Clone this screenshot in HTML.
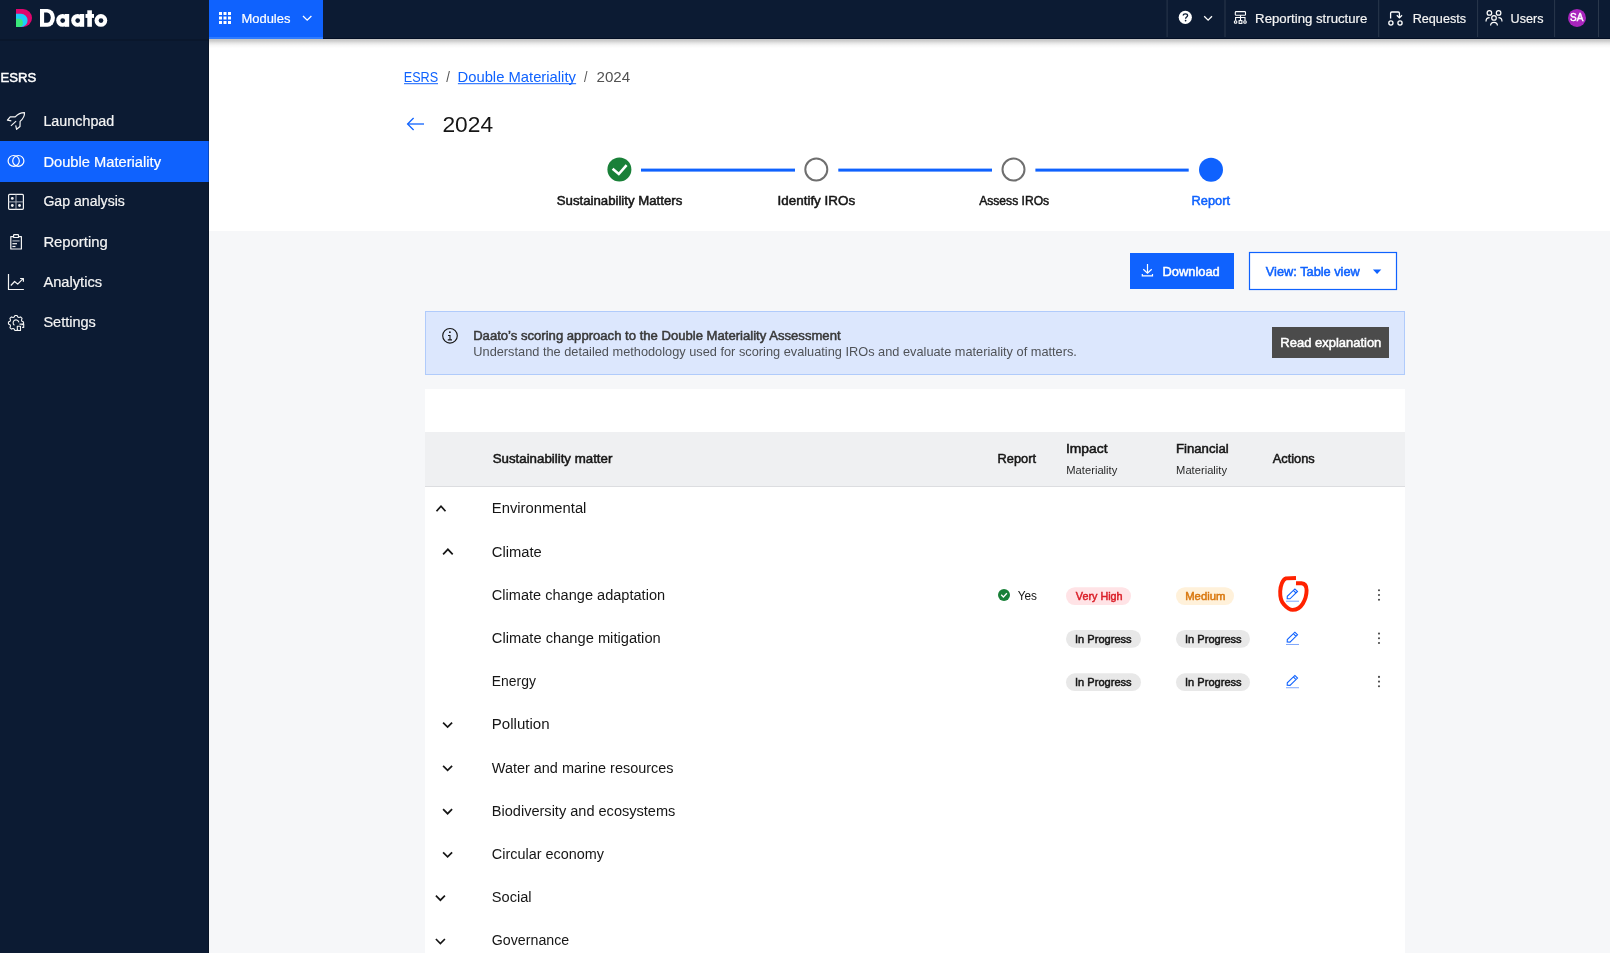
<!DOCTYPE html>
<html lang="en"><head><meta charset="utf-8"><title>Daato - Double Materiality 2024</title>
<style>
html,body{margin:0;padding:0;width:1610px;height:953px;overflow:hidden;background:#f6f7f9}
svg{position:absolute;left:0;top:0;display:block;will-change:transform}
text{font-family:"Liberation Sans",sans-serif;white-space:pre}
</style></head>
<body>
<svg width="1610" height="953" viewBox="0 0 1610 953">
<defs>
  <linearGradient id="hdrShadow" x1="0" y1="0" x2="0" y2="1">
    <stop offset="0" stop-color="#000" stop-opacity="0.22"/>
    <stop offset="0.2" stop-color="#000" stop-opacity="0.20"/>
    <stop offset="0.45" stop-color="#000" stop-opacity="0.10"/>
    <stop offset="0.7" stop-color="#000" stop-opacity="0.035"/>
    <stop offset="1" stop-color="#000" stop-opacity="0"/>
  </linearGradient>
</defs>
<!-- main backgrounds -->
<rect x="209" y="39" width="1401" height="914" fill="#f6f7f9"/>
<rect x="209" y="39" width="1401" height="192" fill="#ffffff"/>
<!-- sidebar -->
<rect x="0" y="39" width="209" height="914" fill="#0c1b33"/>
<rect x="0" y="141" width="209" height="41" fill="#0f62fe"/>
<!-- topbar -->
<rect x="0" y="0" width="1610" height="39" fill="#0c1b33"/>
<rect x="209" y="0" width="114" height="39" fill="#0f62fe"/>
<rect x="323" y="38" width="1287" height="1" fill="#020e24"/>
<rect x="209" y="37" width="114" height="2" fill="#2f7bff"/>
<rect x="209" y="39" width="1401" height="9" fill="url(#hdrShadow)"/>
<rect x="0" y="39" width="209" height="2" fill="#000" fill-opacity="0.12"/>
<rect x="208" y="39" width="1" height="914" fill="#000" fill-opacity="0.25"/>
<!-- top bar separators -->
<g fill="#2a384c">
  <rect x="1166.6" y="0" width="1" height="37"/>
  <rect x="1224.5" y="0" width="1" height="37"/>
  <rect x="1378.2" y="0" width="1" height="37"/>
  <rect x="1477.1" y="0" width="1" height="37"/>
  <rect x="1554.1" y="0" width="1" height="37"/>
  <rect x="1598" y="0" width="1" height="37"/>
</g>
<!-- logo mark -->
<path d="M16,9 H23 A9,9 0 0 1 23,27 H16 Z" fill="#e0066e"/>
<path d="M16,13.8 H21 A6.6,6.6 0 0 1 21,27 H16 Z" fill="#1ecbf9"/>
<path d="M16,18.8 H18.8 A4.1,4.1 0 0 1 18.8,27 H16 Z" fill="#3ae87a"/>
<!-- wordmark -->
<g fill="#ffffff">
  <path d="M40,8.9 H47.5 A7.4,8.95 0 0 1 47.5,26.8 H40 Z"/>
  <circle cx="62.6" cy="20.4" r="6.4"/><rect x="65" y="14" width="4.2" height="12.8"/>
  <circle cx="77.6" cy="20.4" r="6.4"/><rect x="80" y="14" width="4.2" height="12.8"/>
  <rect x="87.3" y="10.3" width="4.6" height="16.5"/><rect x="85.5" y="14" width="8.5" height="3.9"/>
  <circle cx="100.9" cy="20.4" r="6.35"/>
</g>
<g fill="#0c1b33">
  <path d="M44.1,12.4 H47 A3.8,5.15 0 0 1 47,22.7 H44.1 Z"/>
  <circle cx="62.7" cy="20.6" r="2.35"/>
  <circle cx="77.7" cy="20.6" r="2.35"/>
  <circle cx="101" cy="20.6" r="2.35"/>
</g>
<!-- modules grid icon -->
<g fill="#ffffff">
  <rect x="219" y="12" width="3" height="3"/><rect x="223.5" y="12" width="3" height="3"/><rect x="228" y="12" width="3" height="3"/>
  <rect x="219" y="16.5" width="3" height="3"/><rect x="223.5" y="16.5" width="3" height="3"/><rect x="228" y="16.5" width="3" height="3"/>
  <rect x="219" y="21" width="3" height="3"/><rect x="223.5" y="21" width="3" height="3"/><rect x="228" y="21" width="3" height="3"/>
</g>
<polyline points="303,16 307.2,20.2 311.4,16" fill="none" stroke="#ffffff" stroke-width="1.3"/>
<!-- help icon -->
<circle cx="1185.3" cy="17.3" r="6.6" fill="#ffffff"/>
<path d="M1183.2,15.6 C1183.2,13.2 1187.6,13.2 1187.6,15.6 C1187.6,17.1 1185.6,17.1 1185.6,18.8" fill="none" stroke="#0c1b33" stroke-width="1.3"/>
<circle cx="1185.6" cy="20.6" r="0.85" fill="#0c1b33"/>
<polyline points="1204.2,16.2 1208.1,20.1 1212,16.2" fill="none" stroke="#ffffff" stroke-width="1.3"/>
<!-- reporting structure icon -->
<g fill="none" stroke="#ffffff" stroke-width="1.1">
  <rect x="1235.3" y="11.6" width="10.2" height="3.6" rx="0.8"/>
  <path d="M1240.5,15.2 V17.5 M1235.6,20.4 V17.5 H1245 V20.4 M1240.5,17.5 V20.5"/>
  <circle cx="1235.6" cy="22" r="1.3"/>
  <circle cx="1245" cy="22" r="1.3"/>
  <rect x="1239.1" y="20.6" width="2.8" height="2.8"/>
</g>
<!-- requests icon -->
<g fill="none" stroke="#ffffff" stroke-width="1.3">
  <path d="M1390.6,18.4 V13.2 Q1390.6,12 1391.8,12 H1398.2 Q1399.4,12 1399.4,13.2 V17.6"/>
  <polyline points="1396.8,15.3 1399.4,17.9 1402,15.3"/>
  <circle cx="1390.9" cy="23" r="2.1"/>
  <circle cx="1400" cy="23" r="2.1"/>
</g>
<!-- users icon -->
<g fill="none" stroke="#ffffff" stroke-width="1.2">
  <circle cx="1489.4" cy="12.9" r="2.3"/>
  <circle cx="1498.6" cy="12.9" r="2.3"/>
  <circle cx="1494" cy="17.9" r="2.3"/>
  <path d="M1486,21.4 Q1486,17.6 1489.6,17.6"/>
  <path d="M1502,21.4 Q1502,17.6 1498.4,17.6"/>
  <path d="M1490.6,25.6 Q1490.6,22.3 1494,22.3 Q1497.4,22.3 1497.4,25.6"/>
</g>
<!-- avatar -->
<circle cx="1577" cy="17.9" r="9" fill="#a925bd"/>


<!-- sidebar icons -->
<g fill="none" stroke="#f4f4f4" stroke-width="1.2" stroke-linejoin="round">
  <!-- rocket -->
  <path d="M11.3,120.9 L7.4,120.2 L10.2,116.9 L15.2,116.9 C17.5,114.5 20.5,112.5 24.5,112.6 C24.8,116.5 22.5,119.2 20.1,121.4 L20,126.5 L16.6,129.3 L15.7,125.3"/>
  <path d="M10.9,125.9 L16.1,121.1"/>
  <!-- gap grid -->
  <rect x="8.6" y="194.4" width="14.8" height="14.9" rx="1"/>
  <path d="M16,194.4 V209.3 M8.6,201.9 H23.4" stroke="#aab0bb" stroke-width="1"/>
  <!-- clipboard -->
  <path d="M13.3,236.6 H10.8 V249 H21.4 V236.6 H18.9"/>
  <rect x="13.6" y="234.6" width="4.9" height="2.9" rx="0.6"/>
  <path d="M12.4,240.9 H19.6" stroke="#aab0bb"/>
  <path d="M12.4,243.7 H17"/>
  <path d="M12.4,246.5 H15.5"/>
  <!-- analytics -->
  <path d="M8.5,274 V289.5 H23.9"/>
  <polyline points="10.8,285.5 14.6,281.5 17.7,284.1 23.1,278.6"/>
  <polyline points="20.1,278.5 23.4,278.5 23.4,281.8"/>
</g>
<g fill="#f4f4f4">
  <circle cx="12.3" cy="198.4" r="1.4"/>
  <circle cx="12.3" cy="205.5" r="1.4"/>
  <circle cx="19.5" cy="205.5" r="1.4"/>
</g>
<!-- double materiality icon -->
<g fill="none" stroke="#ffffff" stroke-width="1.2">
  <ellipse cx="13.7" cy="160.9" rx="5.6" ry="5.4"/>
  <ellipse cx="18.3" cy="160.9" rx="5.6" ry="5.4"/>
</g>
<!-- settings gear -->
<g fill="none" stroke="#f4f4f4" stroke-width="1.1" stroke-linejoin="round">
  <path d="M17.92,328.90 L17.81,328.93 L17.06,330.53 L14.94,330.53 L14.19,328.93 L13.09,328.47 L11.43,329.07 L9.93,327.57 L10.53,325.91 L10.07,324.81 L8.47,324.06 L8.47,321.94 L10.07,321.19 L10.53,320.09 L9.93,318.43 L11.43,316.93 L13.09,317.53 L14.19,317.07 L14.94,315.47 L17.06,315.47 L17.81,317.07 L18.91,317.53 L20.57,316.93 L22.07,318.43 L21.47,320.09 L21.93,321.19 L23.53,321.94 L23.53,324.06 L21.93,324.81 L21.99,324.60"/>
  <path d="M14.4,325.2 A2.9,2.9 0 1 1 18.9,322.4"/>
  <rect x="17.3" y="326.3" width="3.2" height="4.2"/>
  <path d="M19.5,324.1 H23.7 V327.4 H22.1"/>
</g>

<!-- ===== main header ===== -->
<!-- breadcrumb underlines -->
<rect x="404" y="83.2" width="34" height="1" fill="#0f62fe"/>
<rect x="457.9" y="83.2" width="118.2" height="1" fill="#0f62fe"/>
<!-- back arrow -->
<g fill="none" stroke="#0f62fe" stroke-width="1.3">
  <path d="M407.8,124 H424"/>
  <polyline points="413.6,118 407.6,124 413.6,130"/>
</g>
<!-- stepper -->
<g fill="#0f62fe">
  <rect x="641" y="168.6" width="154" height="3"/>
  <rect x="838.3" y="168.6" width="153.7" height="3"/>
  <rect x="1035.4" y="168.6" width="153.3" height="3"/>
</g>
<circle cx="619.4" cy="169.5" r="12" fill="#198038"/>
<polyline points="612.6,168.8 618.8,174 626.6,165.2" fill="none" stroke="#ffffff" stroke-width="2.6"/>
<circle cx="816.3" cy="169.5" r="11" fill="none" stroke="#6f6f6f" stroke-width="2"/>
<circle cx="1013.5" cy="169.5" r="11" fill="none" stroke="#6f6f6f" stroke-width="2"/>
<circle cx="1211" cy="169.8" r="12" fill="#0f62fe"/>

<!-- buttons -->
<rect x="1130" y="253" width="104" height="36" fill="#0f62fe"/>
<g fill="none" stroke="#ffffff" stroke-width="1.2">
  <path d="M1147.5,264 V272.6"/>
  <polyline points="1143.3,269.3 1147.5,273.2 1151.7,269.3"/>
  <path d="M1142.3,274 V275.9 H1152.5 V274"/>
</g>
<rect x="1249.5" y="252.5" width="147" height="37" fill="#ffffff" stroke="#0f62fe" stroke-width="1.2"/>
<polygon points="1372.9,269.6 1381.3,269.6 1377.1,273.9" fill="#0f62fe"/>

<!-- banner -->
<rect x="425.5" y="311.5" width="979" height="63" fill="#dce7fd" stroke="#b0cbfb" stroke-width="1"/>
<circle cx="450" cy="335.8" r="7.3" fill="none" stroke="#161616" stroke-width="1.15"/>
<circle cx="449.9" cy="332.2" r="0.9" fill="#161616"/>
<path d="M448,335.5 H450 V339.8 M447.8,339.9 H452" fill="none" stroke="#161616" stroke-width="1.1"/>
<rect x="1272" y="327" width="117" height="31" fill="#4b4b4b"/>

<!-- table -->
<rect x="425" y="389" width="980" height="564" fill="#ffffff"/>
<rect x="425" y="432" width="980" height="54.5" fill="#eff0f2"/>
<rect x="425" y="486" width="980" height="1" fill="#dcdde0"/>

<!-- chevrons -->
<g fill="none" stroke="#161616" stroke-width="1.7">
  <polyline points="436.5,511.2 441,506.2 445.5,511.2"/>
  <polyline points="443.1,554.3 447.9,549.3 452.7,554.3"/>
  <polyline points="443.1,722.6 447.6,727.1 452.1,722.6"/>
  <polyline points="443.1,765.9 447.6,770.4 452.1,765.9"/>
  <polyline points="443.1,809.2 447.6,813.7 452.1,809.2"/>
  <polyline points="443.1,852.4 447.6,856.9 452.1,852.4"/>
  <polyline points="435.9,895.7 440.4,900.2 444.9,895.7"/>
  <polyline points="435.9,939 440.4,943.5 444.9,939"/>
</g>

<!-- report yes -->
<circle cx="1004" cy="595" r="6" fill="#198038"/>
<polyline points="1001.2,594.8 1003.4,597 1006.9,593.3" fill="none" stroke="#ffffff" stroke-width="1.3"/>

<!-- pills -->
<rect x="1066" y="587.2" width="65" height="17.8" rx="8.9" fill="#ffe3e6"/>
<rect x="1176" y="587.2" width="58" height="17.8" rx="8.9" fill="#fff1da"/>
<rect x="1066" y="630" width="75" height="17.8" rx="8.9" fill="#e8e8e8"/>
<rect x="1176" y="630" width="74" height="17.8" rx="8.9" fill="#e8e8e8"/>
<rect x="1066" y="673.3" width="75" height="17.8" rx="8.9" fill="#e8e8e8"/>
<rect x="1176" y="673.3" width="74" height="17.8" rx="8.9" fill="#e8e8e8"/>

<!-- edit pencils -->
<g id="pencils">
  <g fill="none" stroke="#0f62fe" stroke-width="1.1">
    <path d="M1287.2,598.7 L1287.3,596.3 L1294.9,588.9 L1297.5,591.5 L1290,598.8 Z M1293.4,590.4 L1296,593"/>
  </g>
  <rect x="1286" y="600.7" width="13" height="1" fill="#7ea6fb"/>
  <g transform="translate(0,43.27)">
    <path d="M1287.2,598.7 L1287.3,596.3 L1294.9,588.9 L1297.5,591.5 L1290,598.8 Z M1293.4,590.4 L1296,593" fill="none" stroke="#0f62fe" stroke-width="1.1"/>
    <rect x="1286" y="600.7" width="13" height="1" fill="#7ea6fb"/>
  </g>
  <g transform="translate(0,86.54)">
    <path d="M1287.2,598.7 L1287.3,596.3 L1294.9,588.9 L1297.5,591.5 L1290,598.8 Z M1293.4,590.4 L1296,593" fill="none" stroke="#0f62fe" stroke-width="1.1"/>
    <rect x="1286" y="600.7" width="13" height="1" fill="#7ea6fb"/>
  </g>
</g>
<!-- overflow dots -->
<g fill="#4a4a4a">
  <circle cx="1379" cy="590.3" r="1.05"/><circle cx="1379" cy="595" r="1.05"/><circle cx="1379" cy="599.7" r="1.05"/>
  <circle cx="1379" cy="633.6" r="1.05"/><circle cx="1379" cy="638.3" r="1.05"/><circle cx="1379" cy="643" r="1.05"/>
  <circle cx="1379" cy="676.9" r="1.05"/><circle cx="1379" cy="681.6" r="1.05"/><circle cx="1379" cy="686.3" r="1.05"/>
</g>
<!-- red annotation scribble -->
<path d="M1296,578 L1286,578.4 C1282.5,579.5 1280.4,586 1280.2,591.2 C1280,597 1281.5,602 1284,604.5 C1286.5,607.5 1289.5,609.9 1292.7,609.9 C1297,609.9 1301,606.5 1302.8,603.6 C1305,600 1306.6,594.5 1306.6,590.3 C1306.6,586.5 1305.5,583.6 1301.5,583.3 L1296,583.2" fill="none" stroke="#ff2200" stroke-width="3.9"/>

<g id="texts">
<text x="241.46" y="23.00" font-size="13.10" font-weight="400" fill="#ffffff" stroke="#ffffff" stroke-width="0.2" textLength="48.92" lengthAdjust="spacingAndGlyphs">Modules</text>
<text x="1255.14" y="23.10" font-size="13.10" font-weight="400" fill="#f4f4f4" stroke="#f4f4f4" stroke-width="0.2" textLength="112.23" lengthAdjust="spacingAndGlyphs">Reporting structure</text>
<text x="1412.69" y="23.10" font-size="13.10" font-weight="400" fill="#f4f4f4" stroke="#f4f4f4" stroke-width="0.2" textLength="53.39" lengthAdjust="spacingAndGlyphs">Requests</text>
<text x="1510.62" y="23.10" font-size="13.10" font-weight="400" fill="#f4f4f4" stroke="#f4f4f4" stroke-width="0.2" textLength="32.86" lengthAdjust="spacingAndGlyphs">Users</text>
<text x="1570.10" y="21.10" font-size="10.40" font-weight="400" fill="#ffffff" stroke="#ffffff" stroke-width="0.5" textLength="13.27" lengthAdjust="spacingAndGlyphs">SA</text>
<text x="0.45" y="82.30" font-size="13.60" font-weight="400" fill="#ffffff" stroke="#ffffff" stroke-width="0.5" textLength="35.74" lengthAdjust="spacingAndGlyphs">ESRS</text>
<text x="43.40" y="126.20" font-size="14.55" font-weight="400" fill="#f4f4f4" stroke="#f4f4f4" stroke-width="0.2" textLength="70.90" lengthAdjust="spacingAndGlyphs">Launchpad</text>
<text x="43.40" y="166.50" font-size="14.55" font-weight="400" fill="#ffffff" stroke="#ffffff" stroke-width="0.2" textLength="117.60" lengthAdjust="spacingAndGlyphs">Double Materiality</text>
<text x="43.40" y="206.20" font-size="14.55" font-weight="400" fill="#f4f4f4" stroke="#f4f4f4" stroke-width="0.2" textLength="81.52" lengthAdjust="spacingAndGlyphs">Gap analysis</text>
<text x="43.40" y="247.00" font-size="14.55" font-weight="400" fill="#f4f4f4" stroke="#f4f4f4" stroke-width="0.2" textLength="64.33" lengthAdjust="spacingAndGlyphs">Reporting</text>
<text x="43.40" y="287.20" font-size="14.55" font-weight="400" fill="#f4f4f4" stroke="#f4f4f4" stroke-width="0.2" textLength="58.74" lengthAdjust="spacingAndGlyphs">Analytics</text>
<text x="43.40" y="327.20" font-size="14.55" font-weight="400" fill="#f4f4f4" stroke="#f4f4f4" stroke-width="0.2" textLength="52.44" lengthAdjust="spacingAndGlyphs">Settings</text>
<text x="403.79" y="81.70" font-size="14.60" font-weight="400" fill="#0f62fe" textLength="34.38" lengthAdjust="spacingAndGlyphs">ESRS</text>
<text x="446.30" y="81.70" font-size="14.60" font-weight="400" fill="#525252" textLength="3.67" lengthAdjust="spacingAndGlyphs">/</text>
<text x="457.52" y="81.70" font-size="14.60" font-weight="400" fill="#0f62fe" textLength="118.38" lengthAdjust="spacingAndGlyphs">Double Materiality</text>
<text x="584.00" y="81.70" font-size="14.60" font-weight="400" fill="#525252" textLength="3.47" lengthAdjust="spacingAndGlyphs">/</text>
<text x="596.54" y="81.70" font-size="14.60" font-weight="400" fill="#525252" textLength="33.65" lengthAdjust="spacingAndGlyphs">2024</text>
<text x="442.46" y="131.70" font-size="21.80" font-weight="400" fill="#161616" textLength="50.63" lengthAdjust="spacingAndGlyphs">2024</text>
<text x="556.77" y="205.00" font-size="12.50" font-weight="400" fill="#161616" stroke="#161616" stroke-width="0.5" textLength="125.52" lengthAdjust="spacingAndGlyphs">Sustainability Matters</text>
<text x="777.59" y="205.00" font-size="12.50" font-weight="400" fill="#161616" stroke="#161616" stroke-width="0.5" textLength="77.51" lengthAdjust="spacingAndGlyphs">Identify IROs</text>
<text x="979.20" y="205.00" font-size="12.50" font-weight="400" fill="#161616" stroke="#161616" stroke-width="0.5" textLength="69.96" lengthAdjust="spacingAndGlyphs">Assess IROs</text>
<text x="1191.58" y="205.00" font-size="12.50" font-weight="400" fill="#0f62fe" stroke="#0f62fe" stroke-width="0.5" textLength="38.40" lengthAdjust="spacingAndGlyphs">Report</text>
<text x="1162.47" y="276.00" font-size="12.50" font-weight="400" fill="#ffffff" stroke="#ffffff" stroke-width="0.5" textLength="57.25" lengthAdjust="spacingAndGlyphs">Download</text>
<text x="1265.80" y="276.00" font-size="12.50" font-weight="400" fill="#0f62fe" stroke="#0f62fe" stroke-width="0.5" textLength="94.00" lengthAdjust="spacingAndGlyphs">View: Table view</text>
<text x="473.15" y="339.80" font-size="12.50" font-weight="400" fill="#393939" stroke="#393939" stroke-width="0.5" textLength="367.42" lengthAdjust="spacingAndGlyphs">Daato’s scoring approach to the Double Materiality Assessment</text>
<text x="473.31" y="355.80" font-size="12.60" font-weight="400" fill="#4f5257" textLength="603.62" lengthAdjust="spacingAndGlyphs">Understand the detailed methodology used for scoring evaluating IROs and evaluate materiality of matters.</text>
<text x="1280.36" y="347.00" font-size="12.50" font-weight="400" fill="#ffffff" stroke="#ffffff" stroke-width="0.5" textLength="100.97" lengthAdjust="spacingAndGlyphs">Read explanation</text>
<text x="492.67" y="463.40" font-size="12.50" font-weight="400" fill="#161616" stroke="#161616" stroke-width="0.5" textLength="119.70" lengthAdjust="spacingAndGlyphs">Sustainability matter</text>
<text x="997.58" y="463.30" font-size="12.50" font-weight="400" fill="#161616" stroke="#161616" stroke-width="0.5" textLength="38.40" lengthAdjust="spacingAndGlyphs">Report</text>
<text x="1065.95" y="453.30" font-size="12.50" font-weight="400" fill="#161616" stroke="#161616" stroke-width="0.5" textLength="41.62" lengthAdjust="spacingAndGlyphs">Impact</text>
<text x="1066.30" y="474.00" font-size="10.90" font-weight="400" fill="#2a2a2a" textLength="51.00" lengthAdjust="spacingAndGlyphs">Materiality</text>
<text x="1175.95" y="453.30" font-size="12.50" font-weight="400" fill="#161616" stroke="#161616" stroke-width="0.5" textLength="52.77" lengthAdjust="spacingAndGlyphs">Financial</text>
<text x="1176.11" y="474.00" font-size="10.90" font-weight="400" fill="#2a2a2a" textLength="50.89" lengthAdjust="spacingAndGlyphs">Materiality</text>
<text x="1272.70" y="463.00" font-size="12.50" font-weight="400" fill="#161616" stroke="#161616" stroke-width="0.5" textLength="42.09" lengthAdjust="spacingAndGlyphs">Actions</text>
<text x="491.80" y="513.00" font-size="14.55" font-weight="400" fill="#161616" textLength="94.62" lengthAdjust="spacingAndGlyphs">Environmental</text>
<text x="491.80" y="557.00" font-size="14.55" font-weight="400" fill="#161616" textLength="50.03" lengthAdjust="spacingAndGlyphs">Climate</text>
<text x="491.80" y="600.00" font-size="14.55" font-weight="400" fill="#161616" textLength="173.32" lengthAdjust="spacingAndGlyphs">Climate change adaptation</text>
<text x="491.80" y="643.00" font-size="14.55" font-weight="400" fill="#161616" textLength="168.92" lengthAdjust="spacingAndGlyphs">Climate change mitigation</text>
<text x="491.80" y="686.00" font-size="14.55" font-weight="400" fill="#161616" textLength="44.10" lengthAdjust="spacingAndGlyphs">Energy</text>
<text x="491.80" y="729.00" font-size="14.55" font-weight="400" fill="#161616" textLength="57.85" lengthAdjust="spacingAndGlyphs">Pollution</text>
<text x="491.80" y="772.70" font-size="14.55" font-weight="400" fill="#161616" textLength="181.73" lengthAdjust="spacingAndGlyphs">Water and marine resources</text>
<text x="491.80" y="816.00" font-size="14.55" font-weight="400" fill="#161616" textLength="183.54" lengthAdjust="spacingAndGlyphs">Biodiversity and ecosystems</text>
<text x="491.80" y="858.80" font-size="14.55" font-weight="400" fill="#161616" textLength="112.20" lengthAdjust="spacingAndGlyphs">Circular economy</text>
<text x="491.80" y="901.70" font-size="14.55" font-weight="400" fill="#161616" textLength="39.81" lengthAdjust="spacingAndGlyphs">Social</text>
<text x="491.80" y="945.00" font-size="14.55" font-weight="400" fill="#161616" textLength="77.41" lengthAdjust="spacingAndGlyphs">Governance</text>
<text x="1017.76" y="600.20" font-size="12.29" font-weight="400" fill="#161616" textLength="19.29" lengthAdjust="spacingAndGlyphs">Yes</text>
<text x="1075.80" y="600.00" font-size="11.10" font-weight="400" fill="#da1e28" stroke="#da1e28" stroke-width="0.5" textLength="46.81" lengthAdjust="spacingAndGlyphs">Very High</text>
<text x="1185.20" y="600.00" font-size="11.10" font-weight="400" fill="#d9780f" stroke="#d9780f" stroke-width="0.5" textLength="40.22" lengthAdjust="spacingAndGlyphs">Medium</text>
<text x="1075.00" y="643.20" font-size="11.10" font-weight="400" fill="#161616" stroke="#161616" stroke-width="0.5" textLength="56.63" lengthAdjust="spacingAndGlyphs">In Progress</text>
<text x="1185.00" y="643.20" font-size="11.10" font-weight="400" fill="#161616" stroke="#161616" stroke-width="0.5" textLength="56.63" lengthAdjust="spacingAndGlyphs">In Progress</text>
<text x="1075.00" y="686.40" font-size="11.10" font-weight="400" fill="#161616" stroke="#161616" stroke-width="0.5" textLength="56.63" lengthAdjust="spacingAndGlyphs">In Progress</text>
<text x="1185.00" y="686.40" font-size="11.10" font-weight="400" fill="#161616" stroke="#161616" stroke-width="0.5" textLength="56.63" lengthAdjust="spacingAndGlyphs">In Progress</text>
</g>
</svg>
</body></html>
